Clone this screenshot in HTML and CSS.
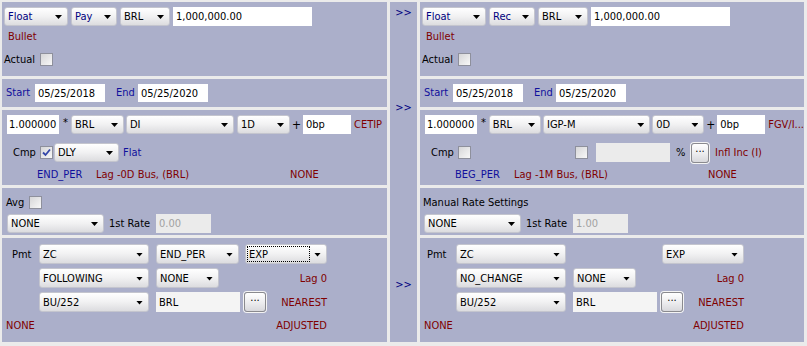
FILE: index.html
```html
<!DOCTYPE html>
<html lang="en">
<head>
    <meta charset="UTF-8">
    <title>Swap Legs</title>
    <link rel="stylesheet" href="styles.css">
</head>
<body>
<div class="screen">

    <!-- Pay leg -->
    <div class="leg">
        <section class="sec notional">
            <div class="row">
                <div class="combo navy w64"><span>Float</span></div>
                <div class="combo navy w46"><span>Pay</span></div>
                <div class="combo w50"><span>BRL</span></div>
                <input class="field w139" value="1,000,000.00">
            </div>
            <div class="red bullet">Bullet</div>
            <div class="row actual">Actual <span class="chk"></span></div>
        </section>

        <section class="sec dates">
            <span class="blue lbl-start">Start</span>
            <input class="field date" value="05/25/2018">
            <span class="blue lbl-end">End</span>
            <input class="field date" value="05/25/2020">
        </section>

        <section class="sec rate">
            <div class="row">
                <input class="field tight w52" value="1.000000">
                <span class="star">*</span>
                <div class="combo w53"><span>BRL</span></div>
                <div class="combo w108 ml2"><span>DI</span></div>
                <div class="combo w53 ml3"><span>1D</span></div>
                <span class="plus">+</span>
                <input class="field w48" value="0bp">
                <span class="red index">CETIP</span>
            </div>
            <div class="row cmp">
                <span class="cmp-lbl">Cmp</span>
                <span class="chk on"><svg width="9" height="9" viewBox="0 0 9 9"><path d="M1 4.5 L3.5 7 L8 1.5" fill="none" stroke="#3346a8" stroke-width="1.8"/></svg></span>
                <div class="combo w65 ml1"><span>DLY</span></div>
                <span class="blue ml4">Flat</span>
            </div>
            <div class="fix">
                <span class="blue">END_PER</span>
                <span class="red">Lag -0D Bus, (BRL)</span>
                <span class="red">NONE</span>
            </div>
        </section>

        <section class="sec avg">
            <div class="row head">Avg <span class="chk"></span></div>
            <div class="row pick">
                <div class="combo w97"><span>NONE</span></div>
                <span class="first">1st Rate</span>
                <input class="field w55" value="0.00" disabled>
            </div>
        </section>

        <section class="sec pmt">
            <span class="pmt-lbl">Pmt</span>
            <div class="combo col-b"><span>ZC</span></div>
            <div class="combo w83"><span>END_PER</span></div>
            <div class="combo focus col-d"><span>EXP</span></div>

            <div class="combo col-b"><span>FOLLOWING</span></div>
            <div class="combo w63"><span>NONE</span></div>
            <span class="red col-d tail">Lag 0</span>

            <div class="combo col-b"><span>BU/252</span></div>
            <input class="field pale w84" value="BRL">
            <div class="col-d split"><button class="dots">...</button><span class="red">NEAREST</span></div>

            <span class="red foot">NONE</span>
            <span class="red col-d tail last">ADJUSTED</span>
        </section>
    </div>

    <!-- copy buttons -->
    <div class="mid">
        <a class="copy">&gt;&gt;</a>
        <a class="copy second">&gt;&gt;</a>
        <a class="copy third">&gt;&gt;</a>
    </div>

    <!-- Receive leg -->
    <div class="leg rec">
        <section class="sec notional">
            <div class="row">
                <div class="combo navy w64"><span>Float</span></div>
                <div class="combo navy w46"><span>Rec</span></div>
                <div class="combo w50"><span>BRL</span></div>
                <input class="field w139" value="1,000,000.00">
            </div>
            <div class="red bullet">Bullet</div>
            <div class="row actual">Actual <span class="chk"></span></div>
        </section>

        <section class="sec dates">
            <span class="blue lbl-start">Start</span>
            <input class="field date" value="05/25/2018">
            <span class="blue lbl-end">End</span>
            <input class="field date" value="05/25/2020">
        </section>

        <section class="sec rate">
            <div class="row">
                <input class="field tight w52" value="1.000000">
                <span class="star">*</span>
                <div class="combo w53"><span>BRL</span></div>
                <div class="combo w109 ml2"><span>IGP-M</span></div>
                <div class="combo w53 ml2"><span>0D</span></div>
                <span class="plus">+</span>
                <input class="field w48" value="0bp">
                <span class="red index">FGV/I...</span>
            </div>
            <div class="row cmp">
                <span class="cmp-lbl">Cmp</span>
                <span class="chk"></span>
                <span class="chk far"></span>
                <input class="field w74 ml8" disabled>
                <span class="pct">%</span>
                <button class="dots narrow">...</button>
                <span class="red ml6">Infl Inc (I)</span>
            </div>
            <div class="fix">
                <span class="blue">BEG_PER</span>
                <span class="red">Lag -1M Bus, (BRL)</span>
                <span class="red">NONE</span>
            </div>
        </section>

        <section class="sec avg">
            <div class="row head">Manual Rate Settings</div>
            <div class="row pick">
                <div class="combo w97"><span>NONE</span></div>
                <span class="first">1st Rate</span>
                <input class="field w55" value="1.00" disabled>
            </div>
        </section>

        <section class="sec pmt">
            <span class="pmt-lbl">Pmt</span>
            <div class="combo col-b"><span>ZC</span></div>
            <div class="combo col-d"><span>EXP</span></div>

            <div class="combo col-b"><span>NO_CHANGE</span></div>
            <div class="combo w63"><span>NONE</span></div>
            <span class="red col-d tail">Lag 0</span>

            <div class="combo col-b"><span>BU/252</span></div>
            <input class="field pale w84" value="BRL">
            <div class="col-d split"><button class="dots">...</button><span class="red">NEAREST</span></div>

            <span class="red foot">NONE</span>
            <span class="red col-d tail last">ADJUSTED</span>
        </section>
    </div>

</div>
</body>
</html>
```

FILE: styles.css
```css
body {
    margin: 0;
    background: #ebebeb;
    font-family: "DejaVu Sans Condensed", "DejaVu Sans", sans-serif;
    font-size: 11px;
    color: #000;
}

.screen {
    display: flex;
    gap: 3px;
    padding: 2px;
}

.leg {
    width: 385px;
    display: flex;
    flex-direction: column;
    gap: 3px;
}
.leg.rec {
    width: 384px;
}

.sec {
    background: #abafca;
    box-sizing: border-box;
}

.row {
    display: flex;
    align-items: center;
}

/* colours */
.blue { color: #10109c; }
.navy { color: #000080; }
.red  { color: #800000; }

/* combo box, xp style */
.combo {
    display: flex;
    align-items: center;
    height: 19px;
    box-sizing: border-box;
    padding-left: 3px;
    border: 1px solid #c4c5ce;
    border-radius: 3px;
    background: linear-gradient(#ffffff, #f1f1f2 50%, #dcdcdf);
    white-space: nowrap;
}
.combo span {
    flex: 1;
    overflow: hidden;
}
.combo::after {              /* the little drop arrow */
    content: "";
    flex: none;
    width: 7px;
    height: 4px;
    margin: 1px 5px 0 4px;
    background: #000;
    clip-path: polygon(0 0, 100% 0, 50% 100%);
}
.combo.focus {
    padding-left: 1px;
}
.combo.focus span {
    align-self: stretch;
    display: flex;
    align-items: center;
    margin: 1px 0;
    padding-left: 2px;
    outline: 1px dotted #000;
    outline-offset: -1px;
}

.field {
    height: 19px;
    box-sizing: border-box;
    margin: 0;
    padding: 0 3px;
    border: 0;
    background: #fff;
    font: inherit;
    color: #000;
    outline: none;
}
.field.tight {
    padding: 0 1px 0 2px;
}
.field:disabled {
    background: #ebebeb;
    color: #a2a2a2;
}
.field.pale {
    background: #f4f4f4;
    height: 20px;
}

.chk {
    flex: none;
    width: 13px;
    height: 13px;
    box-sizing: border-box;
    border: 1px solid #8e909c;
    background: linear-gradient(135deg, #d6d6d8, #f8f8f8);
    display: inline-flex;
    align-items: center;
    justify-content: center;
}

.dots {
    width: 22px;
    height: 20px;
    padding: 0 0 3px;
    box-sizing: border-box;
    border: 1px solid #8a8a8e;
    border-radius: 3px;
    box-shadow: 0 0 0 1px #f4f4f4;
    background: linear-gradient(#ffffff, #ececee 55%, #d8d8dc);
    font: inherit;
    line-height: 20px;
    color: #000;
    display: flex;
    align-items: flex-end;
    justify-content: center;
}
.dots.narrow {
    width: 18px;
}

/* notional block */
.notional {
    height: 74px;
    padding: 5px 2px 0;
}
.notional .row {
    gap: 3px;
}
.bullet {
    margin: 4px 0 0 4px;
    line-height: 13px;
}
.notional .actual {
    margin-top: 9px;
    height: 15px;
    gap: 5px;
}

/* dates */
.dates {
    height: 28px;
    padding: 5px 0 0 4px;
    display: flex;
    align-items: flex-start;
}
.date {
    width: 70px;
    height: 18px;
}
.lbl-start {
    width: 29px;
    line-height: 18px;
}
.lbl-end {
    width: 22px;
    margin-left: 11px;
    line-height: 18px;
}

/* rate */
.rate {
    height: 75px;
    padding: 5px 0 0 5px;
}
.star {
    width: 12px;
    padding-left: 4px;
    box-sizing: border-box;
    align-self: flex-start;
    line-height: 15px;
}
.plus {
    width: 13px;
    text-align: center;
    font-size: 12px;
}
.index {
    margin-left: 3px;
    white-space: nowrap;
}
.cmp {
    margin-top: 9px;
    height: 19px;
}
.cmp-lbl {
    width: 21px;
    margin-left: 6px;
    margin-right: 6px;
}
.chk.far {
    margin-left: 104px;
}
.pct {
    margin-left: 6px;
    width: 15px;
}
.fix {
    display: grid;
    grid-template-columns: 59px 194px auto;
    margin: 6px 0 0 30px;
    line-height: 13px;
    white-space: nowrap;
}

/* averaging */
.avg {
    height: 47px;
    padding: 7px 0 0 4px;
}
.leg.rec .avg {
    padding-left: 3px;
}
.avg .head {
    height: 14px;
    gap: 5px;
}
.avg .pick {
    margin-top: 5px;
}
.avg .pick .combo {
    margin-left: 1px;
}
.first {
    width: 47px;
    margin-left: 5px;
}

/* payment */
.pmt {
    height: 104px;
    padding-top: 6px;
    display: grid;
    grid-template-columns: 37px 117px 88px 83px;
    grid-template-rows: 20px 20px 20px 13px;
    row-gap: 4px;
    align-items: center;
}
.leg.rec .pmt {
    grid-template-columns: 36px 117px 88px 83px;
}
.pmt .combo {
    height: 20px;
}
.pmt-lbl {
    padding-left: 10px;
}
.leg.rec .pmt-lbl {
    padding-left: 7px;
}
.col-b {
    grid-column: 2;
    width: 110px;
}
.col-d {
    grid-column: 4;
}
.pmt .combo.col-d {
    width: 82px;
    justify-self: end;
}
.tail {
    justify-self: end;
}
.split {
    display: flex;
    justify-content: space-between;
    align-items: center;
}
.foot {
    grid-column: 1 / 4;
    padding-left: 4px;
    margin-top: 6px;
}
.tail.last {
    margin-top: 6px;
}

/* middle column */
.mid {
    width: 27px;
    height: 340px;
    box-sizing: border-box;
    padding-top: 4px;
    background: #abafca;
    display: flex;
    flex-direction: column;
    align-items: center;
}
.copy {
    color: #000080;
    line-height: 13px;
    cursor: pointer;
}
.copy.second {
    margin-top: 82px;
}
.copy.third {
    margin-top: 164px;
}

/* widths and spacing helpers, kept last so they win */
.w46 { width: 46px; }
.w48 { width: 48px; }
.w50 { width: 50px; }
.w52 { width: 52px; }
.w53 { width: 53px; }
.w55 { width: 55px; }
.w63 { width: 63px; }
.w64 { width: 64px; }
.w65 { width: 65px; }
.w74 { width: 74px; }
.w83 { width: 83px; }
.w84 { width: 84px; }
.w97 { width: 97px; }
.w108 { width: 108px; }
.w109 { width: 109px; }
.w139 { width: 139px; }
.ml1 { margin-left: 1px; }
.ml2 { margin-left: 2px; }
.ml3 { margin-left: 3px; }
.ml4 { margin-left: 4px; }
.ml6 { margin-left: 6px; }
.ml8 { margin-left: 8px; }
```
